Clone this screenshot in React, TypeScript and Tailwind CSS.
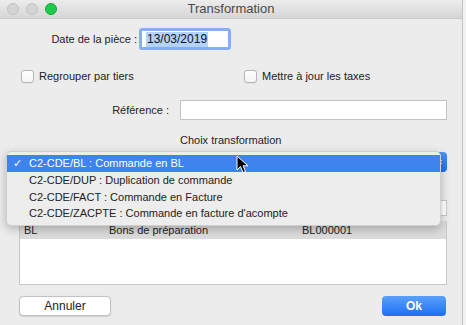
import React from "react";

const Checkbox = ({ label }: { label: string }) => (
  <label className="flex items-center gap-[5px]">
    <span className="h-[13px] w-[13px] rounded-[3px] border border-[#b5b5b5] bg-gradient-to-b from-white to-[#f4f4f4] shadow-[0_0.5px_0.5px_rgba(0,0,0,0.08)]" />
    <span>{label}</span>
  </label>
);

const menuItems = [
  "C2-CDE/DUP : Duplication de commande",
  "C2-CDE/FACT : Commande en Facture",
  "C2-CDE/ZACPTE : Commande en facture d'acompte",
];

export default function App() {
  return (
    <div
      className="relative h-[325px] w-[466px] overflow-hidden bg-[#f2f2f2] text-[11px] text-[#222]"
      style={{ fontFamily: '"Liberation Sans", Arial, sans-serif' }}
    >
      <div className="h-[325px] w-[463px] border-r border-[#c4c4c4] bg-[#ececec]">
        {/* title bar */}
        <div className="relative flex h-[19px] items-center border-b border-[#c9c9c9] bg-gradient-to-b from-[#ececec] to-[#d6d6d6] pl-[7px]">
          <div className="flex gap-[7px]">
            <span className="h-[12px] w-[12px] rounded-full border border-[#c4c4c4] bg-[#d4d4d4]" />
            <span className="h-[12px] w-[12px] rounded-full border border-[#c4c4c4] bg-[#d4d4d4]" />
            <span className="h-[12px] w-[12px] rounded-full border border-[#14a83a] bg-[#1ec94b]" />
          </div>
          <div className="absolute inset-0 flex items-center justify-center text-[13px] text-[#4a4a4a]">
            Transformation
          </div>
        </div>

        {/* date */}
        <div className="mt-[9px] flex h-[22px] items-center">
          <div className="w-[138px] pr-[1px] text-right">Date de la pièce :</div>
          <div className="ml-[1px] flex h-[22px] w-[92px] items-center rounded-[3px] border-[3px] border-[#86aef0] bg-white pl-[4px]">
            <span className="bg-[#b4d3fb] px-[1px] text-[12px] leading-[15px] text-[#111]">13/03/2019</span>
          </div>
        </div>

        {/* checkboxes */}
        <div className="mt-[20px] flex h-[13px] items-center">
          <div className="ml-[21px] w-[223px]">
            <Checkbox label="Regrouper par tiers" />
          </div>
          <Checkbox label="Mettre à jour les taxes" />
        </div>

        {/* reference */}
        <div className="mt-[17px] flex h-[20px] items-center">
          <div className="w-[169px] text-right">Référence :</div>
          <div className="ml-[11px] h-[20px] w-[267px] border border-[#c3c3c3] bg-white" />
        </div>

        {/* choix */}
        <div className="mt-[13px] pl-[180px] leading-[14px]">Choix transformation</div>

        {/* select button (under the open menu) */}
        <div className="ml-[20px] mt-[5px] flex h-[20px] w-[427px] items-center justify-end rounded-[4px] bg-gradient-to-b from-[#4d93f7] to-[#1f6ef2] pr-[4px]">
          <svg width="6" height="10" viewBox="0 0 6 10">
            <path d="M1 4 L3 2 L5 4 M1 6 L3 8 L5 6" stroke="#d5e4fb" strokeWidth="1" fill="none" />
          </svg>
        </div>

        {/* partially hidden field */}
        <div className="ml-[20px] mt-[28px] flex h-[16px] w-[427px] justify-end">
          <div className="h-[16px] w-[120px] border border-[#c8c8c8] bg-white" />
        </div>

        {/* list */}
        <div className="ml-[19px] mt-[5px] h-[64px] w-[428px] border border-[#c8c8c8] border-t-0 bg-white">
          <div className="flex h-[18px] items-center bg-[#dcdcdc]">
            <span className="w-[89px] pl-[4px]">BL</span>
            <span className="w-[193px]">Bons de préparation</span>
            <span>BL000001</span>
          </div>
        </div>

        {/* buttons */}
        <div className="mt-[11px] flex items-center justify-between pl-[19px] pr-[16px]">
          <button className="h-[20px] w-[92px] rounded-[4px] border border-[#c2c2c2] bg-white text-[12px] text-[#222] shadow-[0_0.5px_1px_rgba(0,0,0,0.12)]">
            Annuler
          </button>
          <button className="h-[20px] w-[64px] rounded-[4px] bg-gradient-to-b from-[#5aa0fa] to-[#1b6ef4] text-[12px] font-bold text-white">
            Ok
          </button>
        </div>
      </div>

      {/* open popup menu */}
      <div className="absolute left-[6px] top-[151px] w-[435px] rounded-[5px] border border-[#cfcfcf] bg-[#ededed] py-[3px] shadow-[0_3px_10px_rgba(0,0,0,0.25)]">
        <div className="flex h-[17px] items-center bg-[#3f83ef] text-white">
          <span className="w-[22px] pl-[6px]">✓</span>
          <span>C2-CDE/BL : Commande en BL</span>
        </div>
        {menuItems.map((t) => (
          <div key={t} className="flex h-[16.5px] items-center">
            <span className="w-[22px]" />
            <span>{t}</span>
          </div>
        ))}
      </div>

      {/* mouse cursor */}
      <svg className="absolute left-[236px] top-[155px]" width="13" height="19" viewBox="0 0 13 19">
        <path
          d="M1 1 L1 15 L4.5 11.5 L7 17.5 L9.5 16.5 L7 10.8 L12 10.8 Z"
          fill="#000"
          stroke="#fff"
          strokeWidth="1"
          strokeLinejoin="round"
        />
      </svg>
    </div>
  );
}
